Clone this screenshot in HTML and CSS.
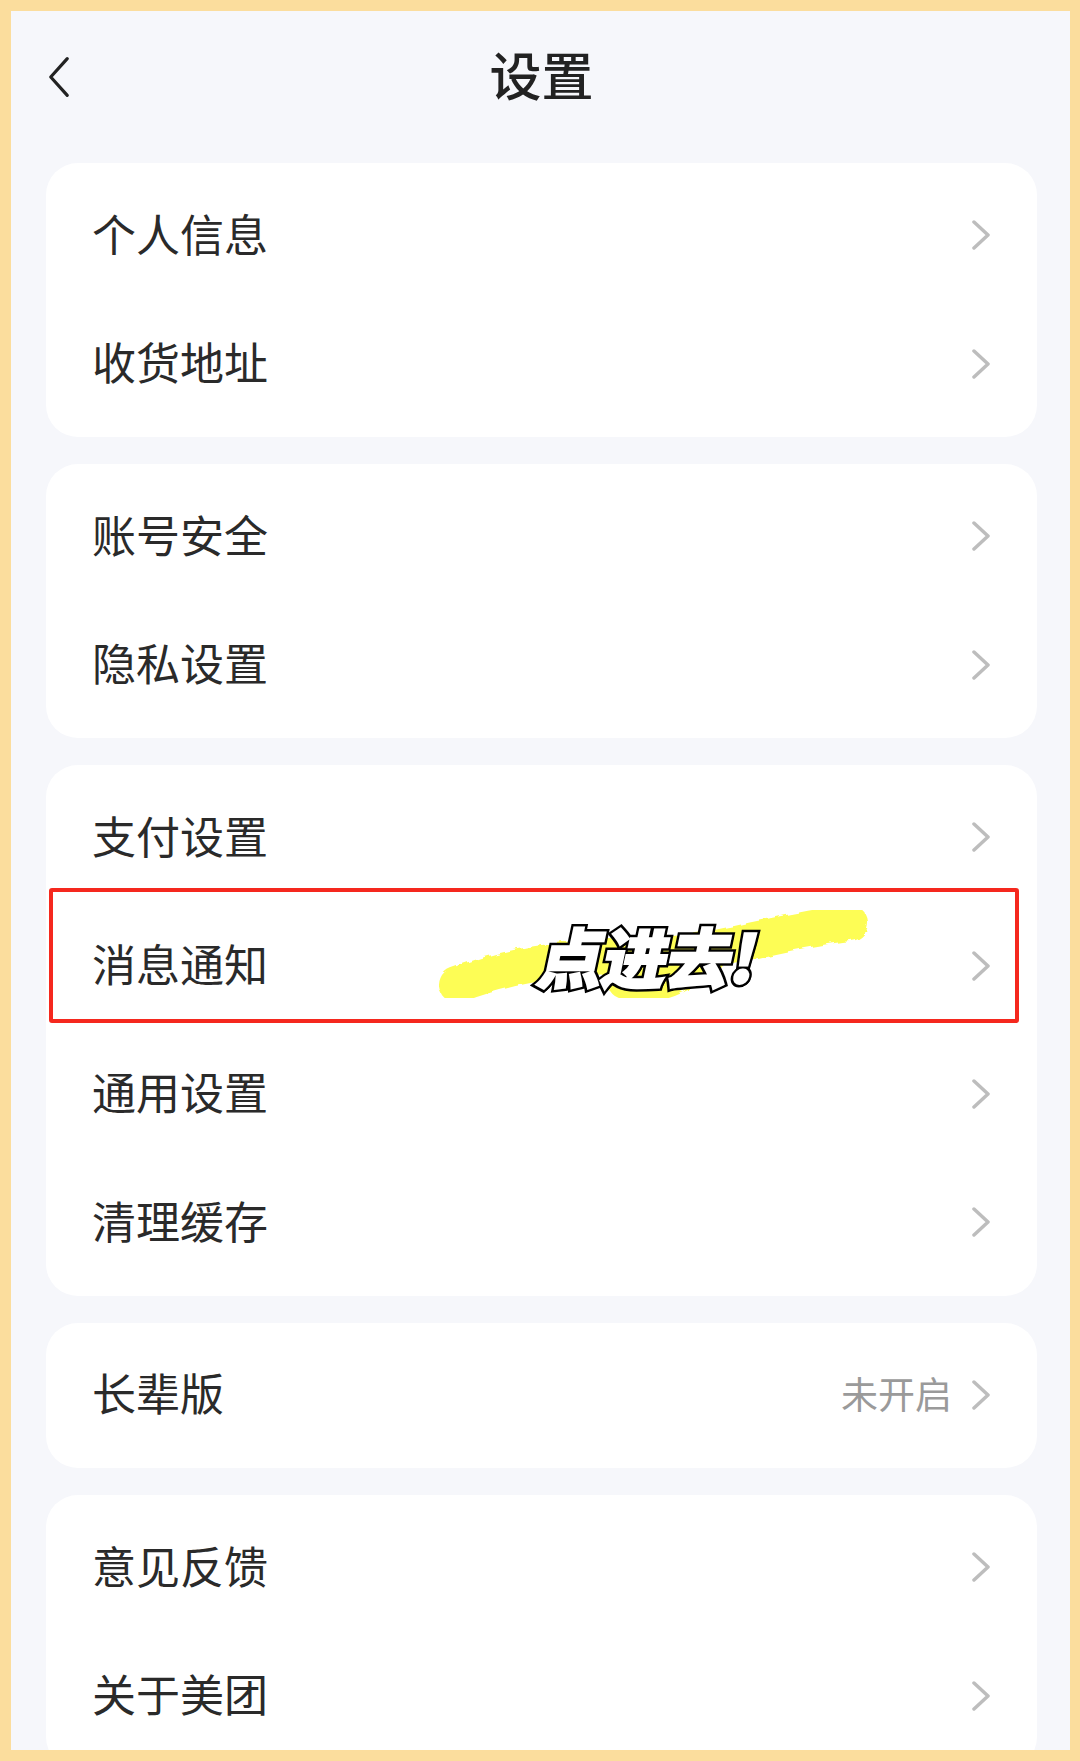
FILE: index.html
```html
<!DOCTYPE html>
<html lang="zh-CN">
<head>
    <meta charset="UTF-8">
    <meta name="viewport" content="width=device-width, initial-scale=1.0">
    <title>设置</title>
    <link rel="stylesheet" href="styles.css">
</head>
<body>
    <div class="screen">
        <div class="header">
            <svg class="back" viewBox="0 0 24 44"><path d="M21 2 L3 22 L21 42"/></svg>
            <h1>设置</h1>
        </div>

        <div class="card">
            <div class="row"><span class="label">个人信息</span><svg class="arrow" viewBox="0 0 18 30"><path d="M2 2 L16 15 L2 28"/></svg></div>
            <div class="row"><span class="label">收货地址</span><svg class="arrow" viewBox="0 0 18 30"><path d="M2 2 L16 15 L2 28"/></svg></div>
        </div>

        <div class="card">
            <div class="row"><span class="label">账号安全</span><svg class="arrow" viewBox="0 0 18 30"><path d="M2 2 L16 15 L2 28"/></svg></div>
            <div class="row"><span class="label">隐私设置</span><svg class="arrow" viewBox="0 0 18 30"><path d="M2 2 L16 15 L2 28"/></svg></div>
        </div>

        <div class="card">
            <div class="row"><span class="label">支付设置</span><svg class="arrow" viewBox="0 0 18 30"><path d="M2 2 L16 15 L2 28"/></svg></div>
            <div class="row">
                <span class="label">消息通知</span><svg class="arrow" viewBox="0 0 18 30"><path d="M2 2 L16 15 L2 28"/></svg>
                <div class="highlight"></div>
                <div class="callout">
                    <svg class="brush" viewBox="0 0 480 100">
                        <filter id="rough" x="-5%" y="-20%" width="110%" height="140%">
                            <feTurbulence type="fractalNoise" baseFrequency="0.09" numOctaves="2" seed="4"/>
                            <feDisplacementMap in="SourceGraphic" scale="6"/>
                        </filter>
                        <g filter="url(#rough)">
                            <path d="M22 78 C90 52 150 50 230 48 C300 42 350 22 415 16"/>
                            <path class="blob" d="M190 74 Q215 84 250 64"/>
                        </g>
                    </svg>
                    <span class="callout-text" data-text="点进去!">点进去!</span>
                </div>
            </div>
            <div class="row"><span class="label">通用设置</span><svg class="arrow" viewBox="0 0 18 30"><path d="M2 2 L16 15 L2 28"/></svg></div>
            <div class="row"><span class="label">清理缓存</span><svg class="arrow" viewBox="0 0 18 30"><path d="M2 2 L16 15 L2 28"/></svg></div>
        </div>

        <div class="card">
            <div class="row"><span class="label">长辈版</span><span class="value">未开启</span><svg class="arrow" viewBox="0 0 18 30"><path d="M2 2 L16 15 L2 28"/></svg></div>
        </div>

        <div class="card">
            <div class="row"><span class="label">意见反馈</span><svg class="arrow" viewBox="0 0 18 30"><path d="M2 2 L16 15 L2 28"/></svg></div>
            <div class="row"><span class="label">关于美团</span><svg class="arrow" viewBox="0 0 18 30"><path d="M2 2 L16 15 L2 28"/></svg></div>
        </div>
    </div>
</body>
</html>
```

FILE: styles.css
```css
body {
    margin: 0;
    font-family: "Noto Sans CJK SC", "Noto Sans", sans-serif;
}
.screen {
    box-sizing: border-box;
    height: 1761px;
    border: 11px solid #fbdd9d;
    border-right-width: 10px;
    background-color: #f6f7fb;
    padding: 0 33px 0 35px;
    overflow: hidden;
    display: flex;
    flex-direction: column;
    gap: 27px;
}
.header {
    position: relative;
    flex-shrink: 0;
    height: 132px;
    margin: 0 0 -7px;
    display: flex;
    align-items: center;
    justify-content: center;
}
.header h1 {
    margin: 0 0 7px;
    font-size: 52px;
    font-weight: 500;
    color: #222;
}
.back {
    position: absolute;
    left: 2px;
    top: 45px;
    width: 22px;
    height: 42px;
    fill: none;
    stroke: #222;
    stroke-width: 3.5;
    stroke-linecap: round;
    stroke-linejoin: round;
}
.card {
    flex-shrink: 0;
    background-color: white;
    border-radius: 32px;
    padding: 8px 0 9.2px;
}
.row {
    position: relative;
    height: 128.4px;
    padding: 0 47px 0 46px;
    display: flex;
    align-items: center;
}
.label {
    font-size: 44px;
    color: #2a2a2a;
    flex: 1;
    margin-bottom: 5px;
}
.value {
    font-size: 37px;
    color: #9a9a9a;
    margin: 0 20px 3px 0;
}
.arrow {
    width: 18px;
    height: 30px;
    fill: none;
    stroke: #bdbdbd;
    stroke-width: 3.5;
    stroke-linecap: round;
    stroke-linejoin: round;
}
.highlight {
    position: absolute;
    left: 3px;
    right: 18px;
    top: -13px;
    bottom: 7px;
    border: 4px solid #f5281e;
    border-radius: 3px;
}
.callout {
    position: absolute;
    left: 389px;
    top: 6px;
    width: 480px;
    height: 100px;
}
.brush {
    width: 480px;
    height: 100px;
    fill: none;
    stroke: #fdfd55;
    stroke-width: 36;
    stroke-linecap: round;
}
.callout-text {
    position: absolute;
    left: 106px;
    top: 8px;
    font-size: 65px;
    line-height: 80px;
    font-weight: 900;
    color: black;
    white-space: nowrap;
    -webkit-text-stroke: 7px black;
    text-shadow: 3px 2px 0 black;
    transform: skewX(-12deg);
    letter-spacing: -1px;
}
.callout-text::after {
    content: attr(data-text);
    position: absolute;
    left: 0;
    top: 0;
    color: white;
    -webkit-text-stroke: 2px white;
    text-shadow: none;
}
```
